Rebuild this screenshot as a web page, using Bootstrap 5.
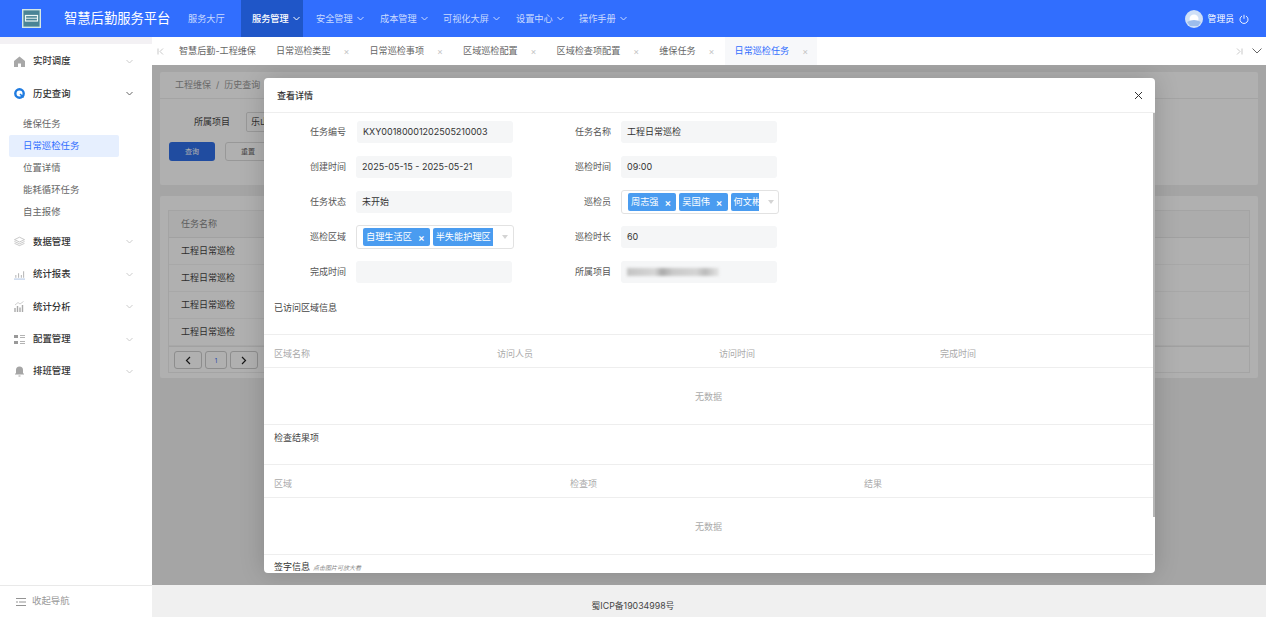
<!doctype html>
<html lang="zh">
<head>
<meta charset="utf-8">
<title>智慧后勤服务平台</title>
<link href="https://cdn.jsdelivr.net/npm/bootstrap@5.3.0/dist/css/bootstrap.min.css" rel="stylesheet">
<style>
html,body{height:617px;overflow:hidden}
body{font-family:Inter,"Noto Sans CJK SC","Noto Sans",sans-serif;font-size:9px;color:#333;background:#fff}
.topbar{height:37px;background:#316efe;color:#fff;padding:0}
.logo-box{width:64px;padding-left:22px}
.brand-title{width:124px;font-size:13.3px;color:#fff;margin:0;padding:0}
.top-nav{font-size:9.2px;height:37px}
.top-nav .nav-link{color:#c9daff;padding:0;height:37px;display:flex;align-items:center;gap:4px}
.top-nav .t1{width:53px}.top-nav .t2{width:62px;padding-left:11px;background:#1f56c8;color:#fff;font-weight:500;margin-right:13px}
.top-nav .t3{width:64px}.top-nav .t4{width:63px}.top-nav .t5{width:73px}.top-nav .t6{width:63px}
.chev{width:7px;height:5px;flex:none}
.user-box{margin-right:17px;font-size:8.8px;color:#fff;gap:5px}
.shell{height:580px}
.side{width:152px;flex:none;background:#fff;border-top:7px solid #f3f1f4;font-size:9.4px}
.side-scroll{padding-top:1px}
.side-item{height:32.4px;padding:0 19px 0 14px;display:flex;align-items:center;color:#333;font-weight:500}
.side-item svg.ico{width:11px;height:11px;margin-right:8px;flex:none}
.side-sub{height:22px;margin:0 33px 0 9px;padding-left:14px;display:flex;align-items:center;color:#666;border-radius:2px}
.side-sub.on{background:#e6effe;color:#316efe}
.side-subs{padding:3px 0 3px}
.side-foot{height:32px;border-top:1px solid #e9e9e9;padding-left:16px;color:#999;gap:6px}
.main-col{min-width:0}
.tabbar{height:28px;background:#fff;font-size:9.1px;color:#666}
.tab-edge{width:17px;padding-left:5px;color:#aaa}
.tab-cell{height:28px;padding:0 9px 0 10px;display:flex;align-items:center;gap:13px;margin-right:1px;white-space:nowrap}
.tab-cell .xx{color:#c4c4c4;font-size:9px;line-height:1}
.tab-cell.cur{color:#316efe;background:#f7f8fa}
.tab-end{width:36px;gap:9px;padding-right:4px;color:#aaa}
.canvas{height:520px;background:#f0f0f0;padding:7px 8px;position:relative;overflow:hidden}
.foot-line{height:32px;background:#f0f0f0;font-size:8.8px;color:#444;padding-top:14px;padding-right:152px}
.paper{background:#fff;border-radius:2px}
.paper-a{height:113px;margin-bottom:11px}
.crumb{height:27px;border-bottom:1px solid #eee;padding-left:15px;color:#999}
.pfield{padding:13px 0 0 34px;color:#444}
.pinput{width:120px;height:20px;border:1px solid #ddd;border-radius:2px;margin-left:16px;padding-left:4px}
.pbtns{padding:10px 0 0 9px;gap:10px}
.btn.pbtn{width:46px;height:19px;border-radius:3px;background:#2f6fe8;color:#fff;border:0;font-size:7px;line-height:19px;padding:0}
.btn.pbtn2{background:#fff;color:#666;border:1px solid #ddd;line-height:17px}
.paper-b{height:182px;padding:14px 8px 0 8px}
.ptable{border:1px solid #eee;height:163px}
.ptable-h{height:27px;padding-left:12px;color:#888;border-bottom:1px solid #eaeaea;background:#fafafa}
.ptable-r{height:27px;padding-left:12px;color:#444;border-bottom:1px solid #f3f3f3}
.pager{padding:0 5px;gap:3px;height:27px;border-top:1px solid #eaeaea}
.pg{width:28px;height:18px;border:1px solid #ccc;border-radius:3px;font-size:6px;color:#316efe}
.pg-num{width:22px}
.dim-layer{position:absolute;inset:0;background:rgba(0,0,0,.31)}
.dlg{position:absolute;left:112px;top:13px;width:891px;height:495px;background:#fff;border:0;border-radius:4px;overflow:hidden;display:flex;flex-direction:column;box-shadow:0 0 24px rgba(0,0,0,.18)}
.dlg-head{height:35px;flex:none;border-bottom:1px solid #eee;padding:1px 12px 0 13px;color:#333;font-weight:500;font-size:9px}
.dlg-body{flex:1;overflow:hidden;position:relative;padding-right:2px}
.thumb{position:absolute;right:0;top:0;width:2px;height:404px;background:#b5b5b5}
.fgrid{display:grid;grid-template-columns:265px 265px;row-gap:13px;padding-top:8px}
.fcell{display:flex;align-items:center;height:22px}
.flabel{width:82px;text-align:right;color:#555;flex:none;margin-right:11px}
.fcell+.fcell .flabel{width:82px;margin-right:10px}
.fval{width:156px;height:22px;background:#f5f6f7;border-radius:3px;padding-left:6px;display:flex;align-items:center;color:#333}
.fsel{width:158px;height:24px;background:#fff;border:1px solid #e2e2e2;border-radius:3px;padding-left:6px;gap:3px;display:flex;align-items:center;overflow:hidden}
.chip{height:18px;background:#4a9cf0;color:#fff;border-radius:2px;padding:0 5px 0 3px;display:flex;align-items:center;gap:6px;white-space:nowrap;flex:none;font-size:9.2px}
.chip b{font-weight:600;font-size:10px;line-height:1}
.chip-cut{overflow:hidden;flex:none;border-radius:2px 0 0 2px;padding-right:0}
.cut-a{width:28px}.cut-b{width:60px}
.caret{width:0;height:0;border:3.5px solid transparent;border-top:4px solid #d4d4d4;border-bottom:0;margin-left:6px;flex:none}
.blurred{width:92px;height:8px;filter:blur(1.6px);background:linear-gradient(90deg,#c4c4c4 0,#d6d6d6 30%,#aaa 38%,#c9c9c9 50%,#d4d4d4 75%,#bbb 85%,#e5e5e5 100%)}
.sec-name{padding-left:10px;color:#444;height:14px;line-height:14px}
.vis-title{margin-top:18px;height:33px}
.tbl-head{display:flex;border-top:1px solid #eee;border-bottom:1px solid #eee;height:34px;align-items:center;color:#aaa;padding-top:5px}
.tbl-head span{padding-left:10px}
.h-a{width:223px}.h-b{width:222px}.h-c{width:221px}
.h-d{width:296px}.h-e{width:294px}
.nodata{height:57px;border-bottom:1px solid #eee;color:#aaa;text-align:center;line-height:58px;font-size:9px}
.res-title{padding-top:6px;height:39px}
.sign-title{padding-top:5px;font-size:9px;color:#333}
.sign-title em{font-size:6px;color:#888;margin-left:3px}
</style>
</head>
<body>
<nav class="navbar topbar d-flex flex-nowrap align-items-center justify-content-start">
  <div class="logo-box">
    <svg width="19" height="19" viewBox="0 0 19 19"><rect x="0.7" y="0.7" width="17.6" height="17.6" fill="#4a8496" stroke="#d5e8e6" stroke-width="1.4"/><rect x="3.500" y="6.500" width="12" height="5.500" fill="none" stroke="#eef7f5" stroke-width="1.200"/><path d="M3.500 9.200h12" stroke="#eef7f5" stroke-width="1"/></svg>
  </div>
  <a class="navbar-brand brand-title" href="#">智慧后勤服务平台</a>
  <ul class="nav top-nav flex-nowrap">
    <li class="nav-item"><a class="nav-link t1" href="#">服务大厅</a></li>
    <li class="nav-item"><a class="nav-link t2" href="#">服务管理<svg class="chev" viewBox="0 0 7 5"><path d="M.5 1l3 3 3-3" fill="none" stroke="#fff"/></svg></a></li>
    <li class="nav-item"><a class="nav-link t3" href="#">安全管理<svg class="chev" viewBox="0 0 7 5"><path d="M.5 1l3 3 3-3" fill="none" stroke="#cddcff"/></svg></a></li>
    <li class="nav-item"><a class="nav-link t4" href="#">成本管理<svg class="chev" viewBox="0 0 7 5"><path d="M.5 1l3 3 3-3" fill="none" stroke="#cddcff"/></svg></a></li>
    <li class="nav-item"><a class="nav-link t5" href="#">可视化大屏<svg class="chev" viewBox="0 0 7 5"><path d="M.5 1l3 3 3-3" fill="none" stroke="#cddcff"/></svg></a></li>
    <li class="nav-item"><a class="nav-link t6" href="#">设置中心<svg class="chev" viewBox="0 0 7 5"><path d="M.5 1l3 3 3-3" fill="none" stroke="#cddcff"/></svg></a></li>
    <li class="nav-item"><a class="nav-link" href="#">操作手册<svg class="chev" viewBox="0 0 7 5"><path d="M.5 1l3 3 3-3" fill="none" stroke="#cddcff"/></svg></a></li>
  </ul>
  <div class="user-box d-flex align-items-center ms-auto">
    <svg width="18" height="18" viewBox="0 0 18 18"><circle cx="9" cy="9" r="9" fill="#cfe0f7"/><circle cx="9" cy="9" r="4.500" fill="#fff"/><path d="M2 12q7-4 14 0l-3 4H5z" fill="#9dbdec"/></svg>
    <span>管理员</span>
    <svg width="10" height="10" viewBox="0 0 10 10"><path d="M3 2a4 4 0 1 0 4 0M5 .8v4" fill="none" stroke="#fff" stroke-width=".9"/></svg>
  </div>
</nav>
<div class="d-flex shell">
  <aside class="side d-flex flex-column">
    <div class="side-scroll flex-grow-1">
      <div class="side-item"><svg class="ico" viewBox="0 0 11 11"><path d="M5.500 0.500L11 5V11H7V7.500H4V11H0V5z" fill="#a8a8a8"/></svg><span>实时调度</span><svg class="chev ms-auto" viewBox="0 0 7 5"><path d="M.5 1l3 3 3-3" fill="none" stroke="#ccc"/></svg></div>
      <div class="side-item"><svg class="ico" viewBox="0 0 11 11"><circle cx="5.500" cy="5.500" r="4.200" fill="#fff" stroke="#1f7be0" stroke-width="2.400"/><path d="M6 6l3.500 3.500" stroke="#1f7be0" stroke-width="1.600"/></svg><span>历史查询</span><svg class="chev ms-auto" viewBox="0 0 7 5"><path d="M.5 1l3 3 3-3" fill="none" stroke="#666"/></svg></div>
      <div class="side-subs">
        <div class="side-sub">维保任务</div>
        <div class="side-sub on">日常巡检任务</div>
        <div class="side-sub">位置详情</div>
        <div class="side-sub">能耗循环任务</div>
        <div class="side-sub">自主报修</div>
      </div>
      <div class="side-item"><svg class="ico" viewBox="0 0 12 11"><path d="M6 .8L11.500 3.500 6 6 .5 3.500zM.5 5.500L6 8l5.500-2.500M.5 7.500L6 10l5.500-2.500" fill="none" stroke="#b5b5b5" stroke-width=".8"/></svg><span>数据管理</span><svg class="chev ms-auto" viewBox="0 0 7 5"><path d="M.5 1l3 3 3-3" fill="none" stroke="#ccc"/></svg></div>
      <div class="side-item"><svg class="ico" viewBox="0 0 12 11"><path d="M0 10.500h12" stroke="#a9bfe0" stroke-width="1"/><path d="M2 9V6M5 9V4M8 9V6M10.500 9V2" stroke="#b5b5b5" stroke-width="1.100"/></svg><span>统计报表</span><svg class="chev ms-auto" viewBox="0 0 7 5"><path d="M.5 1l3 3 3-3" fill="none" stroke="#ccc"/></svg></div>
      <div class="side-item"><svg class="ico" viewBox="0 0 11 11"><path d="M1 11V7M3.500 11V5M6 11V6.500M8.500 11V4" stroke="#aaa" stroke-width="1.400"/><path d="M1 4L4 1.500 6 3l3.500-2.500" fill="none" stroke="#c5c5c5" stroke-width=".8"/></svg><span>统计分析</span><svg class="chev ms-auto" viewBox="0 0 7 5"><path d="M.5 1l3 3 3-3" fill="none" stroke="#ccc"/></svg></div>
      <div class="side-item"><svg class="ico" viewBox="0 0 11 11"><path d="M0 1h4v3H0zM0 7h4v3H0z" fill="#999"/><path d="M6 1.500h5M6 3.500h5M6 7.500h5M6 9.500h5" stroke="#aaa" stroke-width=".9"/></svg><span>配置管理</span><svg class="chev ms-auto" viewBox="0 0 7 5"><path d="M.5 1l3 3 3-3" fill="none" stroke="#ccc"/></svg></div>
      <div class="side-item"><svg class="ico" viewBox="0 0 11 11"><path d="M5.500.5a3.500 3.500 0 0 1 3.500 3.500v3.500H2V4A3.500 3.500 0 0 1 5.500.5zM1 7.500h9v1H1zM4.500 9.500h2v1h-2z" fill="#a5a5a5"/></svg><span>排班管理</span><svg class="chev ms-auto" viewBox="0 0 7 5"><path d="M.5 1l3 3 3-3" fill="none" stroke="#ccc"/></svg></div>
    </div>
    <div class="side-foot d-flex align-items-center">
      <svg width="10" height="8" viewBox="0 0 10 8"><path d="M0 .5h10M3 4h7M0 7.500h10M0 4h2" stroke="#888" stroke-width=".9"/></svg>
      <span>收起导航</span>
    </div>
  </aside>
  <div class="main-col flex-grow-1 d-flex flex-column">
    <div class="tabbar d-flex align-items-center">
      <div class="tab-edge">
        <svg width="7" height="7" viewBox="0 0 7 7"><path d="M1 .5v6M6 .5L3 3.500 6 6.500" fill="none" stroke="#bbb" stroke-width=".8"/></svg>
      </div>
      <div class="tab-cell"><span>智慧后勤-工程维保</span></div>
      <div class="tab-cell"><span>日常巡检类型</span><span class="xx">×</span></div>
      <div class="tab-cell"><span>日常巡检事项</span><span class="xx">×</span></div>
      <div class="tab-cell"><span>区域巡检配置</span><span class="xx">×</span></div>
      <div class="tab-cell"><span>区域检查项配置</span><span class="xx">×</span></div>
      <div class="tab-cell"><span>维保任务</span><span class="xx">×</span></div>
      <div class="tab-cell cur"><span>日常巡检任务</span><span class="xx">×</span></div>
      <div class="tab-end d-flex align-items-center justify-content-end ms-auto">
        <svg width="7" height="7" viewBox="0 0 7 7"><path d="M6 .5v6M1 .5L4 3.500 1 6.500" fill="none" stroke="#bbb" stroke-width=".8"/></svg>
        <svg width="10" height="6" viewBox="0 0 10 6"><path d="M.5.5L5 5 9.500.5" fill="none" stroke="#555" stroke-width=".9"/></svg>
      </div>
    </div>
    <div class="canvas">
      <div class="paper paper-a">
        <div class="crumb d-flex align-items-center">工程维保&nbsp;&nbsp;/&nbsp;&nbsp;历史查询</div>
        <div class="pfield d-flex align-items-center">所属项目<div class="pinput d-flex align-items-center">乐山</div></div>
        <div class="pbtns d-flex"><button class="btn pbtn" type="button">查询</button><button class="btn pbtn pbtn2" type="button">重置</button></div>
      </div>
      <div class="paper paper-b">
        <div class="ptable">
          <div class="ptable-h d-flex align-items-center">任务名称</div>
          <div class="ptable-r d-flex align-items-center">工程日常巡检</div>
          <div class="ptable-r d-flex align-items-center">工程日常巡检</div>
          <div class="ptable-r d-flex align-items-center">工程日常巡检</div>
          <div class="ptable-r d-flex align-items-center">工程日常巡检</div>
          <div class="pager d-flex align-items-center">
            <div class="pg d-flex align-items-center justify-content-center"><svg width="6" height="9" viewBox="0 0 6 9"><path d="M5 1L1.500 4.500 5 8" fill="none" stroke="#222" stroke-width="1.200"/></svg></div>
            <div class="pg pg-num d-flex align-items-center justify-content-center">1</div>
            <div class="pg d-flex align-items-center justify-content-center"><svg width="6" height="9" viewBox="0 0 6 9"><path d="M1 1l3.500 3.500L1 8" fill="none" stroke="#222" stroke-width="1.200"/></svg></div>
          </div>
        </div>
      </div>
      <div class="dim-layer">
        <div class="dlg modal-content" role="dialog">
          <div class="dlg-head d-flex align-items-center justify-content-between">
            <span>查看详情</span>
            <svg width="9" height="9" viewBox="0 0 9 9"><path d="M1 1l7 7M8 1L1 8" stroke="#333" stroke-width="1"/></svg>
          </div>
          <div class="dlg-body">
            <div class="thumb"></div>
            <div class="fgrid">
              <div class="fcell"><span class="flabel">任务编号</span><div class="fval">KXY00180001202505210003</div></div>
              <div class="fcell"><span class="flabel">任务名称</span><div class="fval">工程日常巡检</div></div>
              <div class="fcell"><span class="flabel">创建时间</span><div class="fval">2025-05-15 - 2025-05-21</div></div>
              <div class="fcell"><span class="flabel">巡检时间</span><div class="fval">09:00</div></div>
              <div class="fcell"><span class="flabel">任务状态</span><div class="fval">未开始</div></div>
              <div class="fcell"><span class="flabel">巡检员</span><div class="fsel"><span class="chip">周志强<b>×</b></span><span class="chip">吴国伟<b>×</b></span><span class="chip chip-cut cut-a">何文彬</span><i class="caret"></i></div></div>
              <div class="fcell"><span class="flabel">巡检区域</span><div class="fsel"><span class="chip">自理生活区<b>×</b></span><span class="chip chip-cut cut-b">半失能护理区</span><i class="caret"></i></div></div>
              <div class="fcell"><span class="flabel">巡检时长</span><div class="fval">60</div></div>
              <div class="fcell"><span class="flabel">完成时间</span><div class="fval"></div></div>
              <div class="fcell"><span class="flabel">所属项目</span><div class="fval"><div class="blurred"></div></div></div>
            </div>
            <div class="sec-name vis-title">已访问区域信息</div>
            <div class="tbl-head"><span class="h-a">区域名称</span><span class="h-b">访问人员</span><span class="h-c">访问时间</span><span>完成时间</span></div>
            <div class="nodata">无数据</div>
            <div class="sec-name res-title">检查结果项</div>
            <div class="tbl-head"><span class="h-d">区域</span><span class="h-e">检查项</span><span>结果</span></div>
            <div class="nodata">无数据</div>
            <div class="sec-name sign-title">签字信息<em>点击图片可放大看</em></div>
          </div>
        </div>
      </div>
    </div>
    <div class="foot-line text-center">蜀ICP备19034998号</div>
  </div>
</div>
<script src="https://cdn.jsdelivr.net/npm/bootstrap@5.3.0/dist/js/bootstrap.bundle.min.js"></script>
</body>
</html>
